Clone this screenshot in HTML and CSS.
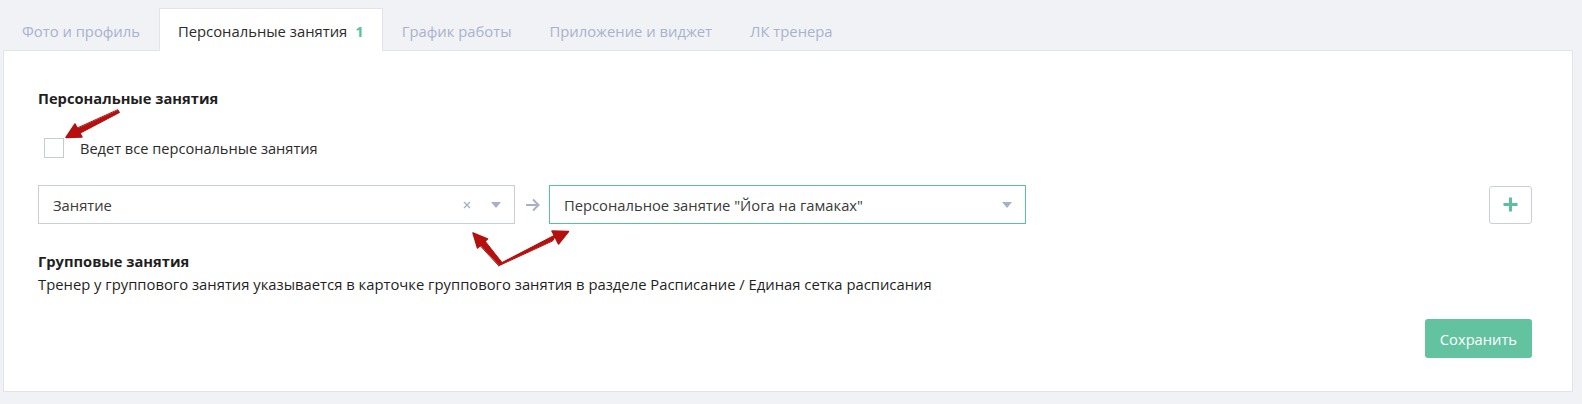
FILE: index.html
```html
<!DOCTYPE html>
<html lang="ru">
<head>
<meta charset="utf-8">
<title>Тренер</title>
<link rel="stylesheet" href="styles.css">
</head>
<body>
<div class="page">
  <nav class="tabs">
    <div class="tab">Фото и профиль</div>
    <div class="tab tab-active">Персональные занятия <span class="tab-count">1</span></div>
    <div class="tab">График работы</div>
    <div class="tab">Приложение и виджет</div>
    <div class="tab">ЛК тренера</div>
  </nav>
  <section class="panel">
    <h2 class="section-title">Персональные занятия</h2>
    <label class="check-row">
      <span class="checkbox"></span>
      <span class="check-label">Ведет все персональные занятия</span>
    </label>
    <div class="select-row">
      <div class="select">
        <span class="select-value">Занятие</span>
        <span class="select-clear">
          <svg width="8" height="8" viewBox="0 0 8 8"><path d="M1 1L7 7M7 1L1 7" stroke="#a7b0c8" stroke-width="1.4" fill="none"/></svg>
        </span>
        <span class="select-caret"></span>
      </div>
      <span class="row-arrow">
        <svg width="15" height="14" viewBox="0 0 15 14"><path d="M1 7H13.5M8 1.5L13.5 7L8 12.5" stroke="#a7b0c8" stroke-width="2" fill="none"/></svg>
      </span>
      <div class="select select-focused">
        <span class="select-value">Персональное занятие "Йога на гамаках"</span>
        <span class="select-caret"></span>
      </div>
      <div class="spacer"></div>
      <button class="add-btn" type="button">
        <svg width="15" height="15" viewBox="0 0 15 15"><path d="M7.5 0.5V14.5M0.5 7.5H14.5" stroke="#5cbf9d" stroke-width="3" fill="none"/></svg>
      </button>
    </div>
    <h2 class="section-title group-title">Групповые занятия</h2>
    <p class="group-text">Тренер у группового занятия указывается в карточке группового занятия в разделе Расписание / Единая сетка расписания</p>
    <div class="actions">
      <button class="save-btn" type="button">Сохранить</button>
    </div>
  </section>
  <svg class="annotations" width="1582" height="404" viewBox="0 0 1582 404">
    <g fill="#b3100f" stroke="#b3100f" stroke-linecap="round" stroke-linejoin="round">
      <polygon points="118,110 119.5,112.5 79.5,133.5 77,128.5" stroke-width="1"/>
      <polygon points="66,137.5 82,137 75,124" stroke-width="1.5"/>
      <polygon points="499,265.5 502,262.5 485,241 480,245" stroke-width="1"/>
      <polygon points="473,233 487.5,239 477.5,248" stroke-width="1.5"/>
      <polygon points="499,265.5 502,262.5 556,234.5 553,240.5" stroke-width="1"/>
      <polygon points="568.5,231.5 552,231 558.5,244" stroke-width="1.5"/>
    </g>
  </svg>
</div>
</body>
</html>
```

FILE: styles.css
```css
* { box-sizing: border-box; }

html, body {
  margin: 0;
  padding: 0;
  background: #f1f2f6;
}

body {
  font-family: "Open Sans", "Noto Sans", "DejaVu Sans", sans-serif;
  color: #2b2b2b;
  width: 1582px;
  height: 404px;
  overflow: hidden;
}

.page {
  position: relative;
  padding: 8px 9px 0 3px;
  height: 404px;
}

.tabs {
  display: flex;
  height: 42px;
  position: relative;
  z-index: 1;
}

.tab {
  display: flex;
  align-items: center;
  padding: 0 18px;
  border: 1px solid transparent;
  border-bottom: none;
  font-size: 14.8px;
  color: #a8b2cc;
  white-space: nowrap;
  padding-top: 2px;
}

.tab-active {
  background: #fff;
  border-color: #e1e4ec;
  color: #2b2b2b;
  height: 43px;
}

.tab-count {
  color: #5cbf9d;
  font-weight: 700;
  margin-left: 8px;
}

.panel {
  background: #fff;
  border: 1px solid #e1e4ec;
  padding: 37px 40px 33px 34px;
}

.section-title {
  margin: 0;
  font-size: 14.7px;
  line-height: 20px;
  font-weight: 700;
  color: #1f1f1f;
}

.check-row {
  display: flex;
  align-items: center;
  margin-top: 30px;
  margin-left: 6px;
  height: 20px;
}

.checkbox {
  width: 20px;
  height: 20px;
  border: 1px solid #c6cbd8;
  background: #fff;
  flex: none;
}

.check-label {
  margin-left: 16px;
  font-size: 14.6px;
  line-height: 20px;
  color: #2b2b2b;
}

.select-row {
  display: flex;
  align-items: center;
  margin-top: 27px;
}

.select {
  width: 477px;
  height: 39px;
  border: 1px solid #c9ceda;
  display: flex;
  align-items: center;
  padding: 0 13px 0 14px;
  font-size: 14.75px;
  color: #3a3a3a;
}

.select-focused {
  border-color: #5cbf9d;
}

.select-value {
  flex: 1;
  white-space: nowrap;
}

.select-clear {
  display: flex;
  margin-right: 20px;
}

.select-caret {
  width: 0;
  height: 0;
  border-left: 5.5px solid transparent;
  border-right: 5.5px solid transparent;
  border-top: 6px solid #a7b0c8;
}

.row-arrow {
  display: flex;
  width: 34px;
  justify-content: center;
}

.spacer { flex: 1; }

.add-btn {
  width: 43px;
  height: 38px;
  border: 1px solid #c9ceda;
  border-radius: 3px;
  background: #fff;
  display: flex;
  align-items: center;
  justify-content: center;
  padding: 0;
}

.group-title {
  margin-top: 27px;
}

.group-text {
  margin: 3px 0 0;
  font-size: 14.8px;
  line-height: 20px;
  color: #1f1f1f;
}

.actions {
  display: flex;
  justify-content: flex-end;
  margin-top: 25px;
}

.save-btn {
  height: 39px;
  padding: 0 15px;
  border: none;
  border-radius: 3px;
  background: #63c3a1;
  color: #fff;
  font-family: inherit;
  font-size: 14.7px;
}

.annotations {
  position: absolute;
  left: 0;
  top: 0;
  pointer-events: none;
}
```
